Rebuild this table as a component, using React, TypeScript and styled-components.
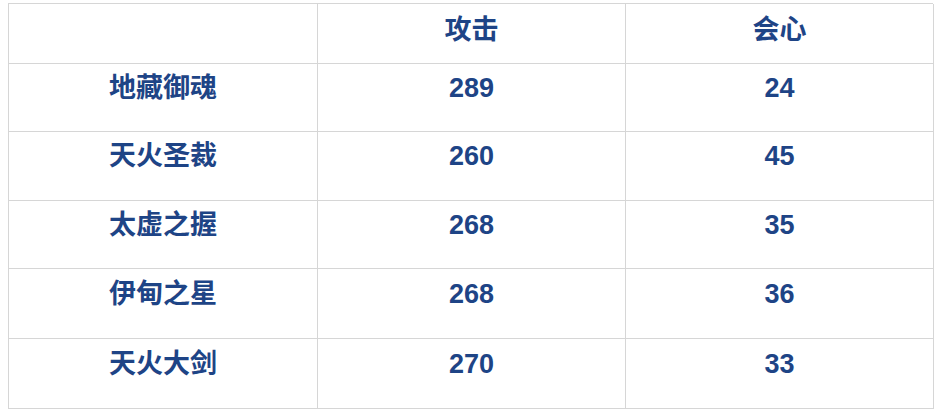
import React from "react";
import styled, { createGlobalStyle } from "styled-components";

const GlobalStyle = createGlobalStyle`
  html, body { margin: 0; padding: 0; background: #ffffff; }
  body { font-family: "Liberation Sans", "Noto Sans CJK SC", sans-serif; }
`;

const Page = styled.div`
  padding: 3px 7px 0 8px;
`;

const Table = styled.div`
  display: grid;
  grid-template-columns: 309px 308px 308px;
  grid-template-rows: 60px 68px 69px 68px 70px 70px;
  border-top: 1px solid #d6d6d6;
  border-left: 1px solid #d6d6d6;
  width: 925px;
  box-sizing: border-box;
`;

const Cell = styled.div<{ $head?: boolean }>`
  box-sizing: border-box;
  border-right: 1px solid #d6d6d6;
  border-bottom: 1px solid #d6d6d6;
  display: flex;
  align-items: center;
  justify-content: center;
  padding-bottom: ${(p) => (p.$head ? "6px" : "19px")};
  color: #1e4486;
  font-family: "Liberation Sans", "Noto Sans CJK SC", sans-serif;
  font-weight: 700;
  font-size: 27px;
  line-height: 1;
`;

const rows = [
  ["地藏御魂", "289", "24"],
  ["天火圣裁", "260", "45"],
  ["太虚之握", "268", "35"],
  ["伊甸之星", "268", "36"],
  ["天火大剑", "270", "33"],
];

export default function App() {
  return (
    <Page>
      <GlobalStyle />
      <Table>
        <Cell $head />
        <Cell $head>攻击</Cell>
        <Cell $head>会心</Cell>
        {rows.map((r) =>
          r.map((v, i) => <Cell key={r[0] + i}>{v}</Cell>)
        )}
      </Table>
    </Page>
  );
}
